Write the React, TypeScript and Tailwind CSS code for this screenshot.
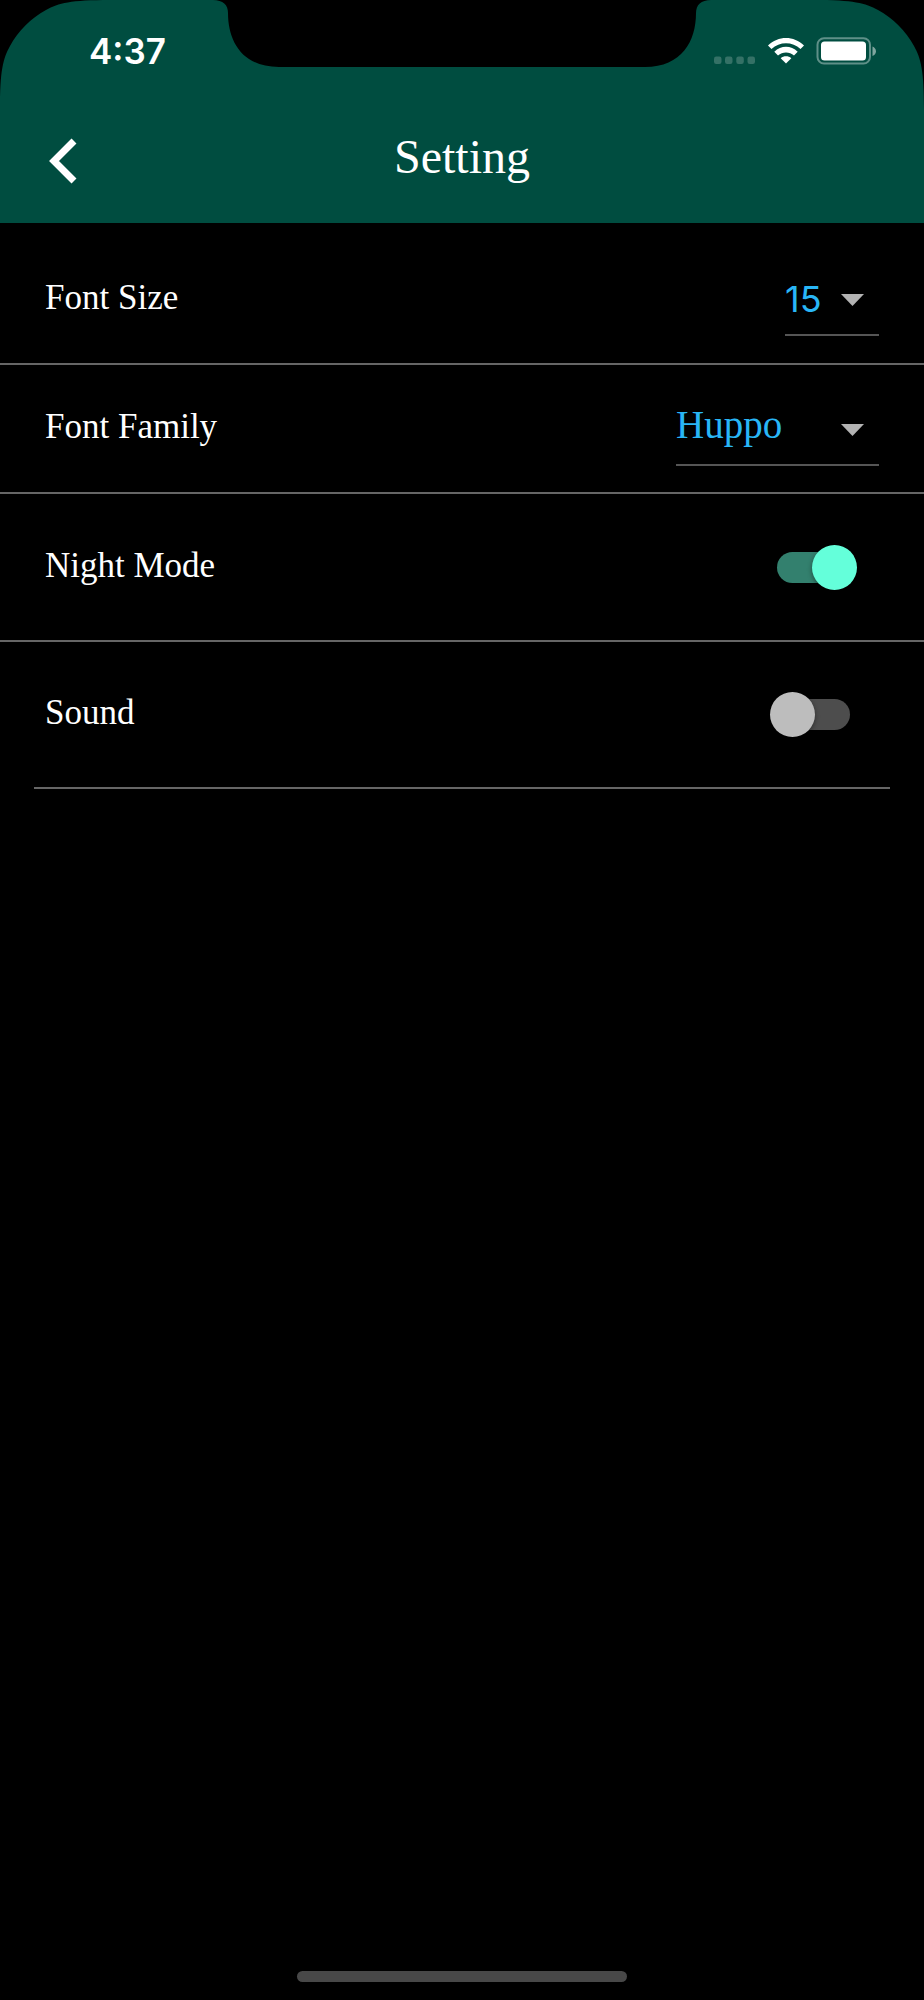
import React, { useState } from 'react'

const serif = "font-['Liberation_Serif',serif]"

const StatusBar: React.FC = () => {
  return (
    <div className="flex h-[101px] items-center justify-between pl-[89px] pr-12">
      <span className="pt-0.5 font-['Inter',sans-serif] text-[35px] font-semibold leading-none">4:37</span>
      <svg width="162" height="28" viewBox="0 0 162 28" fill="none">
        {/* no signal */}
        <g fill="#347166">
          <rect x="0" y="19.500" width="7.500" height="7.500" rx="2.200" />
          <rect x="11" y="19.500" width="7.500" height="7.500" rx="2.200" />
          <rect x="22.300" y="19.500" width="7.500" height="7.500" rx="2.200" />
          <rect x="33.500" y="19.500" width="7.500" height="7.500" rx="2.200" />
        </g>
        {/* wifi */}
        <g fill="#fff">
          <path d="M54 8.500C64 -1.500 80 -1.500 90 8.500L86.500 12C78.500 4.300 65.500 4.300 57.500 12Z" />
          <path d="M60.300 14.800C67 8.200 77 8.200 83.700 14.800L80 18.500C75.500 14.400 68.500 14.400 64 18.500Z" />
          <path d="M66.700 21.200C69.600 18.600 74.400 18.600 77.300 21.200L72 26.500Z" />
        </g>
        {/* battery */}
        <rect x="103.500" y="1.200" width="52.500" height="25.300" rx="6.500" stroke="#5f9088" strokeWidth="2" />
        <rect x="107" y="4.500" width="45" height="19" rx="3.500" fill="#fff" />
        <path d="M158.500 9.500C160.500 10.500 162 12 162 14.200C162 16.500 160.500 18.200 158.500 19Z" fill="#80a69f" />
      </svg>
    </div>
  )
}

const Header: React.FC = () => {
  return (
    <header className="relative bg-[#004d40] text-white">
      {/* rounded screen corners and notch */}
      <svg className="absolute left-0 top-0" width="110" height="110" viewBox="0 0 110 110">
        <path d="M0 0H110C70 0 59 3 46 10C31 18 18 31 10 46C3 59 0 70 0 110Z" />
      </svg>
      <svg className="absolute left-1/2 top-0 -translate-x-1/2" width="498" height="67" viewBox="0 0 498 67">
        <path d="M0 0C10 0 15 5 15 13C15 41 29 67 66 67H432C469 67 483 41 483 13C483 5 488 0 498 0Z" />
      </svg>
      <svg className="absolute right-0 top-0 -scale-x-100" width="110" height="110" viewBox="0 0 110 110">
        <path d="M0 0H110C70 0 59 3 46 10C31 18 18 31 10 46C3 59 0 70 0 110Z" />
      </svg>
      <StatusBar />
      <div className="grid h-[122px] grid-cols-[1fr_auto_1fr] items-center px-12">
        <button type="button" aria-label="Back" className="justify-self-start pb-0.5">
          <svg width="30" height="46" viewBox="0 0 30 46" fill="none" stroke="#fff" strokeWidth="7">
            <path d="M26 3L6 23L26 43" />
          </svg>
        </button>
        <h1 className={`${serif} pb-2.5 text-[48px] leading-none`}>Setting</h1>
      </div>
    </header>
  )
}

type RowProps = {
  id: string
  label: string
  className: string
  children: React.ReactNode
}

const Row: React.FC<RowProps> = ({ id, label, className, children }) => {
  return (
    <div className={`flex items-center justify-between pl-[45px] pr-[45px] ${className}`}>
      <label htmlFor={id} className={`${serif} pb-1 text-[35px] leading-none text-white`}>{label}</label>
      {children}
    </div>
  )
}

type DropdownProps = {
  id: string
  value: string
  options: string[]
  className: string
  onChange: (value: string) => void
}

const Dropdown: React.FC<DropdownProps> = ({ id, value, options, className, onChange }) => {
  return (
    <div className="relative">
      <select
        id={id}
        value={value}
        onChange={(e) => onChange(e.target.value)}
        className={`block h-[74px] appearance-none border-b-2 border-[#555] bg-black text-[#29b6f6] outline-none ${className}`}
      >
        {options.map((item) => (
          <option key={item} value={item}>{item}</option>
        ))}
      </select>
      <svg className="pointer-events-none absolute right-[15px] top-8" width="23" height="12" viewBox="0 0 23 12">
        <path d="M0 0H23L11.500 12Z" fill="#b3b3b3" />
      </svg>
    </div>
  )
}

type ToggleProps = {
  id: string
  checked: boolean
  onChange: (checked: boolean) => void
}

const Toggle: React.FC<ToggleProps> = ({ id, checked, onChange }) => {
  return (
    <span className="relative mr-[22px] flex h-[45px] w-[87px] items-center px-[7px]">
      <input
        id={id}
        type="checkbox"
        role="switch"
        checked={checked}
        onChange={(e) => onChange(e.target.checked)}
        className="peer absolute inset-0 z-10 h-full w-full cursor-pointer opacity-0"
      />
      <span className="h-[31px] w-full rounded-full bg-[#4d4d4d] peer-checked:bg-[#33806e]" />
      <span className="absolute left-0 top-0 h-[45px] w-[45px] rounded-full bg-[#bdbdbd] shadow-[0_2px_5px_rgba(0,0,0,0.4)] peer-checked:left-auto peer-checked:right-0 peer-checked:bg-[#64ffda]" />
    </span>
  )
}

const App: React.FC = () => {
  const [fontSize, setFontSize] = useState("15")
  const [fontFamily, setFontFamily] = useState("Huppo")
  const [nightMode, setNightMode] = useState(true)
  const [sound, setSound] = useState(false)

  return (
    <div className="flex min-h-screen flex-col bg-black">
      <Header />
      <main className="flex-1 pt-3">
        <Row id="font-size" label="Font Size" className="h-32">
          <Dropdown
            id="font-size"
            value={fontSize}
            options={["13", "14", "15", "16", "18"]}
            onChange={setFontSize}
            className="w-[94px] pt-0.5 font-['Inter',sans-serif] text-[36px]"
          />
        </Row>
        <hr className="border-t-2 border-[#666]" />
        <Row id="font-family" label="Font Family" className="h-[127px]">
          <Dropdown
            id="font-family"
            value={fontFamily}
            options={["Huppo", "Roboto", "Lato"]}
            onChange={setFontFamily}
            className="w-[203px] pb-1 font-['Liberation_Serif',serif] text-[39px]"
          />
        </Row>
        <hr className="border-t-2 border-[#666]" />
        <Row id="night-mode" label="Night Mode" className="h-[146px]">
          <Toggle id="night-mode" checked={nightMode} onChange={setNightMode} />
        </Row>
        <hr className="border-t-2 border-[#666]" />
        <Row id="sound" label="Sound" className="h-[145px]">
          <Toggle id="sound" checked={sound} onChange={setSound} />
        </Row>
        <hr className="mx-[34px] border-t-2 border-[#666]" />
      </main>
      {/* home indicator */}
      <div className="mb-[18px] h-[11px] w-[330px] self-center rounded-full bg-[#484848]" />
    </div>
  )
}

export default App
